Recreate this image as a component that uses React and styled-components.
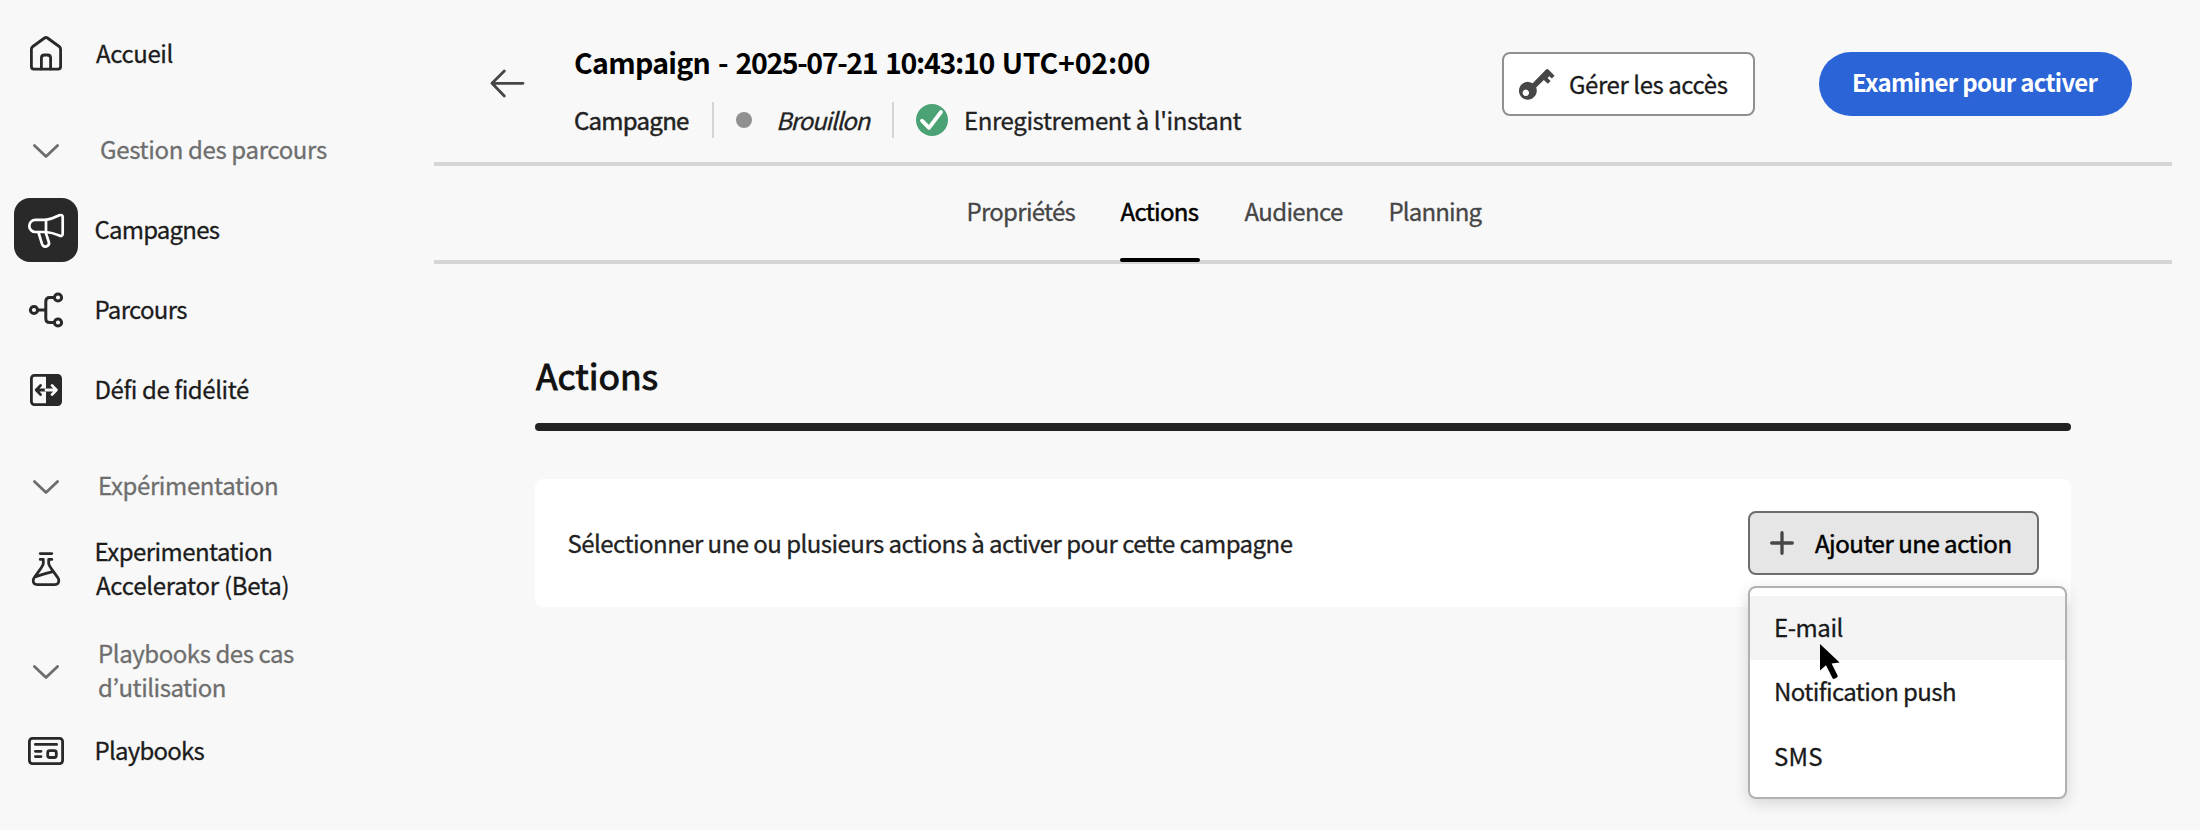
import React from "react";
import styled, { createGlobalStyle, css } from "styled-components";

const GlobalStyle = createGlobalStyle`
  *, *::before, *::after { box-sizing: border-box; }
  body {
    margin: 0;
    background: #f8f8f8;
    color: #222;
    font-family: "Noto Sans CJK KR", "Noto Sans", sans-serif;
    font-size: 24px;
  }
  svg { display: block; overflow: visible; flex: none; }
`;

const Page = styled.div`
  display: flex;
  height: 830px;
  overflow: hidden;
`;

/* Letter-spacing and optical weight of a piece of text */
const Text = styled.span`
  display: block;
  white-space: nowrap;
  line-height: 34px;
  letter-spacing: ${(p) => p.$track || 0}px;
  -webkit-text-stroke: ${(p) => p.$stroke ?? 0.3}px currentColor;
  padding-left: ${(p) => p.$indent || 0}px;
  padding-bottom: ${(p) => p.$lift || 0}px;
`;

/* Sidebar */
const Sidebar = styled.nav`
  flex: none;
  width: 434px;
  padding-top: 20px;
  display: flex;
  flex-direction: column;
`;

const NavRow = styled.a`
  display: flex;
  align-items: center;
  height: ${(p) => p.$h || 64}px;
  margin-top: ${(p) => p.$gap}px;
  padding-left: 14px;
  color: ${(p) => (p.$section ? "#6e6e6e" : "#1c1c1c")};
`;

const NavIcon = styled.span`
  flex: none;
  width: 64px;
  height: 64px;
  border-radius: 16px;
  display: flex;
  align-items: center;
  justify-content: center;
  margin-right: 16px;
  color: ${(p) => (p.$section ? "#6e6e6e" : p.$active ? "#fff" : "#292929")};
  ${(p) => p.$active && css`background: #292929;`}
`;

const NavLabel = styled.span`
  display: block;
  padding-bottom: ${(p) => p.$lift}px;
`;

/* Main column */
const Main = styled.main`
  flex: none;
  width: 1738px;
`;

const Header = styled.header`
  display: flex;
  height: 166px;
  padding: 0 40px 0 55px;
  border-bottom: 4px solid #d5d5d5;
`;

const BackButton = styled.button`
  flex: none;
  width: 85px;
  height: 36px;
  margin-top: 65px;
  padding: 0;
  border: 0;
  background: none;
  color: #464646;
`;

const Heading = styled.div`
  flex: 1;
  padding-top: 44px;
`;

const Title = styled.h1`
  margin: 0 0 22px;
  font-size: 28.5px;
  line-height: 36px;
  font-weight: 700;
  letter-spacing: -0.7px;
  word-spacing: 2px;
  color: #000;
  white-space: nowrap;
`;

const TitlePart = styled.span`
  letter-spacing: ${(p) => p.$track}px;
`;

const Meta = styled.div`
  display: flex;
  align-items: center;
  height: 36px;
`;

const MetaItem = styled.div`
  display: flex;
  align-items: center;
  height: 36px;
  width: ${(p) => p.$w}px;
  & + & {
    border-left: 2px solid #d5d5d5;
    padding-left: ${(p) => p.$pad}px;
  }
`;

const Dot = styled.span`
  width: 16px;
  height: 16px;
  border-radius: 50%;
  background: #909090;
  margin-right: 24px;
`;

const HeaderActions = styled.div`
  display: flex;
  gap: 64px;
  padding-top: 52px;
`;

const Button = styled.button`
  flex: none;
  display: flex;
  align-items: center;
  width: ${(p) => p.$w}px;
  height: 64px;
  padding: 0;
  font-family: inherit;
  font-size: 24px;
  color: #1a1a1a;
  background: #fff;
  border: 2px solid #909090;
  border-radius: 8px;
`;

const AccessButton = styled(Button)`
  padding-left: 13px;
  gap: 14px;
`;

const PrimaryButton = styled(Button)`
  padding-left: 33px;
  font-weight: 700;
  color: #fff;
  background: #2a64d6;
  border: 0;
  border-radius: 32px;
`;

const AddButton = styled(Button)`
  padding-left: 20px;
  gap: 21px;
  color: #000;
  background: #e6e6e6;
  border-color: #6d6d6d;
  & > svg { color: #464646; }
`;

/* Tabs */
const TabBar = styled.div`
  display: flex;
  gap: 44px;
  height: 98px;
  padding-left: 532px;
  border-bottom: 4px solid #d5d5d5;
`;

const Tab = styled.div`
  position: relative;
  width: ${(p) => p.$w}px;
  padding-top: 28px;
  color: ${(p) => (p.$active ? "#000" : "#464646")};
  ${(p) => p.$active && css`
    &::after {
      content: "";
      position: absolute;
      left: 0;
      right: 0;
      bottom: -2px;
      height: 4px;
      border-radius: 2px;
      background: #000;
    }
  `}
`;

/* Content */
const Content = styled.section`
  padding: 87px 101px 0;
`;

const SectionTitle = styled.h2`
  margin: 0 0 24px;
  padding-left: 1px;
  font-size: 35.5px;
  line-height: 48px;
  font-weight: 400;
  -webkit-text-stroke: 1px currentColor;
  color: #111;
`;

const Rule = styled.div`
  height: 8px;
  border-radius: 4px;
  background: #222;
`;

const Card = styled.div`
  display: flex;
  align-items: center;
  justify-content: space-between;
  height: 128px;
  margin-top: 48px;
  padding: 0 32px;
  border-radius: 8px;
  background: #fff;
`;

const MenuAnchor = styled.div`
  position: relative;
`;

const Menu = styled.ul`
  position: absolute;
  top: 75px;
  left: 0;
  width: 319px;
  height: 213px;
  margin: 0;
  padding: 8px 0;
  list-style: none;
  background: #fff;
  border: 2px solid #b1b1b1;
  border-radius: 8px;
  box-shadow: 0 4px 16px rgba(0, 0, 0, 0.14);
`;

const MenuItem = styled.li`
  display: flex;
  align-items: center;
  height: 64px;
  padding-left: 24px;
  color: #1a1a1a;
  background: ${(p) => (p.$hover ? "#f4f4f4" : "transparent")};
`;

const Pointer = styled.svg`
  position: absolute;
  left: 72px;
  top: 133px;
`;

/* Icons */
const Icon = ({ w = 36, h = 36, sw = 2.8, children }) => (
  <svg width={w} height={h} viewBox={`0 0 ${w} ${h}`} fill="none" stroke="currentColor"
    strokeWidth={sw} strokeLinecap="round" strokeLinejoin="round">{children}</svg>
);

const HomeIcon = () => (
  <Icon>
    <path d="M13.4 34V23Q13.4 20 16.4 20H19.6Q22.6 20 22.6 23V34" />
    <path d="M5.9 34.1H30.1Q32.6 34.1 32.6 31.6V14.2Q32.6 12.5 31.2 11.5L19.5 3Q18 2 16.5 3L4.8 11.5Q3.4 12.5 3.4 14.2V31.6Q3.4 34.1 5.9 34.1Z" />
  </Icon>
);
const ChevronIcon = () => (
  <Icon w={26} h={14}><path d="M1.4 1.4L13 12.6L24.6 1.4" /></Icon>
);
const MegaphoneIcon = () => (
  <Icon sw={2.7}>
    <path d="M18 7.8H7.4a6 6 0 0 0 0 12.2H18Z" />
    <path d="M18 7.8Q24 7 31.4 3.3Q34.7 2.2 34.7 5.2V21.4Q34.7 24.6 31.4 23.6Q24 20.5 18 20" />
    <path d="M10.4 20.2L13.9 31.6Q15.2 35.4 18.4 34.4Q21.8 33.4 20.8 30L17.6 20.2" />
  </Icon>
);
const JourneyIcon = () => (
  <Icon sw={3}>
    <circle cx="6" cy="18" r="3.6" /><circle cx="30" cy="5.5" r="3.6" /><circle cx="30" cy="30.5" r="3.6" />
    <path d="M9.6 18H17.8M26.4 5.5H21.8Q17.8 5.5 17.8 9.5V26.5Q17.8 30.5 21.8 30.5H26.4" />
  </Icon>
);
const SwapIcon = () => (
  <Icon>
    <rect x="3.4" y="3.4" width="29.2" height="29.2" rx="3" />
    <path d="M18 3.4H30a2.6 2.6 0 0 1 2.6 2.6V30a2.6 2.6 0 0 1 -2.6 2.6H18Z" fill="currentColor" stroke="none" />
    <path d="M18 18H8.2M12.6 13.4L8.2 18L12.6 22.6" />
    <path d="M18 18H28.4M24 13.4L28.4 18L24 22.6" stroke="#f8f8f8" />
  </Icon>
);
const FlaskIcon = () => (
  <Icon>
    <path d="M12.2 2.6H23.8M12.2 8.4H15.3V12.5C15.3 16 5.8 25.5 5.3 28.6Q4.6 33.6 9.4 33.6H26.6Q31.4 33.6 30.7 28.6C30.2 25.5 20.7 16 20.7 12.5V8.4H23.8" />
    <path d="M7.8 25.6C14 23.5 18 22 25 20.6" />
  </Icon>
);
const PlaybookIcon = () => (
  <Icon>
    <rect x="1.4" y="5.4" width="33.2" height="25.2" rx="3" />
    <path d="M7.4 11.4H28.6M7.4 18.3H13M7.4 23.6H13" />
    <rect x="19.7" y="17.7" width="8.6" height="6.8" rx="2" />
  </Icon>
);
const BackIcon = () => (
  <Icon w={36} h={34}><path d="M34 17.3H3M15.3 5L3 17.3L15.3 30" /></Icon>
);
const CheckIcon = () => (
  <svg width="32" height="32" viewBox="0 0 32 32" fill="none">
    <circle cx="16" cy="16" r="16" fill="#4ba375" />
    <path d="M6 16.7L13 23.8L25 8" stroke="#fff" strokeWidth="3.8" strokeLinecap="round" strokeLinejoin="round" />
  </svg>
);
const KeyIcon = () => (
  <svg width="38" height="34" viewBox="0 0 38 34" fill="#464646">
    <path fillRule="evenodd" d="M15.6 16.2L29.3 2.3Q30.2 1.5 31.1 2.3L37.6 8.8L34.8 11.6L32.3 9.3L30.6 11L33.6 13.9L30.8 16.7L26.8 13L19.2 20.6A8.9 8.9 0 1 1 15.6 16.2ZM8.8 22.6a3.2 3.2 0 1 0 .01 0Z" />
  </svg>
);
const PlusIcon = () => (
  <Icon w={24} h={24} sw={3.3}><path d="M12 1.7V22.3M1.7 12H22.3" /></Icon>
);

const NAV = [
  { icon: HomeIcon, gap: 0, h: 65, lift: 0, lines: [["Accueil", -0.42, 2]] },
  { section: true, gap: 34, lift: 4, lines: [["Gestion des parcours", -0.35, 6]] },
  { icon: MegaphoneIcon, active: true, gap: 15, lift: 2, lines: [["Campagnes", -0.8, 0.5]] },
  { icon: JourneyIcon, gap: 16, lift: 2, lines: [["Parcours", -0.7, 0.5]] },
  { icon: SwapIcon, gap: 16, lift: 2, lines: [["Défi de fidélité", -0.42, 0.5]] },
  { section: true, gap: 33, lift: 4, lines: [["Expérimentation", -0.38, 4]] },
  { icon: FlaskIcon, gap: 16, h: 68, lift: 2, lines: [["Experimentation", -0.55, 0.5], ["Accelerator (Beta)", -0.26, 2]] },
  { section: true, gap: 35, h: 68, lift: 5, lines: [["Playbooks des cas", -0.44, 4], ["d’utilisation", -0.5, 4]] },
  { icon: PlaybookIcon, gap: 13, lift: 2, lines: [["Playbooks", -0.77, 0.5]] },
];

const TABS = [
  ["Propriétés", -0.72, 110],
  ["Actions", -0.7, 80],
  ["Audience", -0.66, 100],
  ["Planning", -0.86, 96],
];

export default function App() {
  return (
    <Page>
      <GlobalStyle />
      <Sidebar>
        {NAV.map(({ icon: Glyph = ChevronIcon, section, active, gap, h, lift, lines }) => (
          <NavRow key={lines[0][0]} $gap={gap} $h={h} $section={section}>
            <NavIcon $section={section} $active={active}><Glyph /></NavIcon>
            <NavLabel $lift={lift}>
              {lines.map(([t, track, indent]) => (
                <Text key={t} $track={track} $indent={indent}>{t}</Text>
              ))}
            </NavLabel>
          </NavRow>
        ))}
      </Sidebar>
      <Main>
        <Header>
          <BackButton aria-label="Retour"><BackIcon /></BackButton>
          <Heading>
            <Title>
              Campaign - <TitlePart $track={-1.4}>2025-07-21</TitlePart>{" "}
              <TitlePart $track={-1.3}>10:43:10</TitlePart>{" "}
              <TitlePart $track={-0.2}>UTC+02:00</TitlePart>
            </Title>
            <Meta>
              <MetaItem $w={138}><Text $track={-0.74} $stroke={0.5}>Campagne</Text></MetaItem>
              <MetaItem $w={180} $pad={26}>
                <Dot />
                <Text as="em" $track={-1.15}>Brouillon</Text>
              </MetaItem>
              <MetaItem $w={360} $pad={22}>
                <CheckIcon />
                <Text $track={-0.4} $indent={16}>Enregistrement à l'instant</Text>
              </MetaItem>
            </Meta>
          </Heading>
          <HeaderActions>
            <AccessButton $w={253}>
              <KeyIcon />
              <Text $track={-0.43}>Gérer les accès</Text>
            </AccessButton>
            <PrimaryButton $w={313}>
              <Text $track={-0.72} $stroke={0} $lift={5}>Examiner pour activer</Text>
            </PrimaryButton>
          </HeaderActions>
        </Header>
        <TabBar>
          {TABS.map(([t, track, w]) => (
            <Tab key={t} $w={w} $active={t === "Actions"}>
              <Text $track={track} $indent={0.5} $stroke={t === "Actions" ? 0.5 : 0.3}>{t}</Text>
            </Tab>
          ))}
        </TabBar>
        <Content>
          <SectionTitle>Actions</SectionTitle>
          <Rule />
          <Card>
            <Text $track={-0.54} $indent={0.5}>
              Sélectionner une ou plusieurs actions à activer pour cette campagne
            </Text>
            <MenuAnchor>
              <AddButton $w={291}>
                <PlusIcon />
                <Text $track={-0.48} $stroke={0.5}>Ajouter une action</Text>
              </AddButton>
              <Menu>
                <MenuItem $hover><Text $track={-0.45} $lift={2}>E-mail</Text></MenuItem>
                <MenuItem><Text $track={-0.6} $lift={2}>Notification push</Text></MenuItem>
                <MenuItem><Text $track={0.2}>SMS</Text></MenuItem>
              </Menu>
              <Pointer width="20" height="36" viewBox="0 0 20 36">
                <path d="M0 0V26.5L6 21.3L12.4 34Q13.4 35.4 15 34.6L17 33.6Q18.2 32.8 17.6 31.6L11.6 19.4L19.6 18.4Z" fill="#000" />
              </Pointer>
            </MenuAnchor>
          </Card>
        </Content>
      </Main>
    </Page>
  );
}
